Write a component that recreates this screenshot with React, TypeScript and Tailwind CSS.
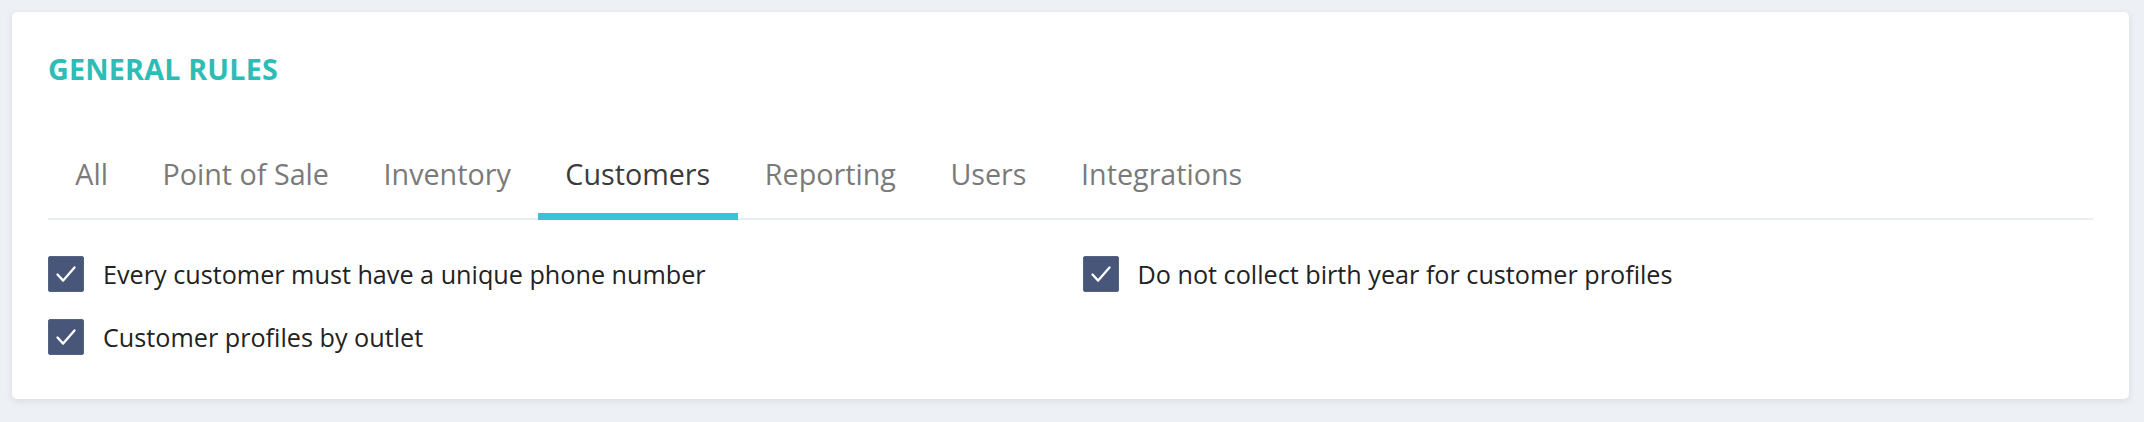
import { useState } from "react";

const TABS = ["All", "Point of Sale", "Inventory", "Customers", "Reporting", "Users", "Integrations"];

const RULES = [
  { id: "unique-phone", label: "Every customer must have a unique phone number" },
  { id: "no-birth-year", label: "Do not collect birth year for customer profiles" },
  { id: "by-outlet", label: "Customer profiles by outlet" },
];

function CheckBox({ checked }: { checked: boolean }) {
  return (
    <span
      className={`flex h-9 w-9 shrink-0 items-center justify-center rounded-[2px] border ${
        checked ? "border-[#56637f] bg-[#485679]" : "border-[#c5ccd6] bg-white"
      }`}
    >
      {checked && (
        <svg width="36" height="36" viewBox="0 0 36 36" fill="none">
          <polyline
            points="9,18.5 15,25 27,11"
            stroke="white"
            strokeWidth="2.4"
            strokeLinecap="round"
            strokeLinejoin="round"
          />
        </svg>
      )}
    </span>
  );
}

export default function App() {
  const [active, setActive] = useState("Customers");
  const [checked, setChecked] = useState<Record<string, boolean>>({
    "unique-phone": true,
    "no-birth-year": true,
    "by-outlet": true,
  });

  return (
    <div className="min-h-screen bg-[#edf0f4] pt-3 pl-3 pr-[15px] pb-6 font-['Open_Sans',sans-serif]">
      <div className="rounded-[5px] bg-white px-9 pt-[38px] pb-[44px] shadow-[0_2px_6px_rgba(60,80,110,0.12)]">
        <h2 className="text-[28.7px] leading-[38px] font-bold tracking-[0.2px] text-[#2dbdb6]">GENERAL RULES</h2>

        <div className="mt-[67px] flex border-b-2 border-[#e9eef3]">
          {TABS.map((tab) => (
            <button
              key={tab}
              onClick={() => setActive(tab)}
              className={`-mb-[2px] border-b-[7px] px-[27.3px] pb-[20px] text-[28.7px] leading-[38px] ${
                active === tab ? "border-[#38c4d2] text-[#3b3b3b]" : "border-transparent text-[#7a7a7a]"
              }`}
            >
              {tab}
            </button>
          ))}
        </div>

        <div className="mt-[36px] grid grid-cols-2 gap-x-6 gap-y-[27px]">
          {RULES.map((r) => (
            <label
              key={r.id}
              className="flex cursor-pointer items-center gap-[19px]"
              onClick={() => setChecked((c) => ({ ...c, [r.id]: !c[r.id] }))}
            >
              <CheckBox checked={checked[r.id]} />
              <span className="text-[25.2px] leading-[36px] text-[#222]">{r.label}</span>
            </label>
          ))}
        </div>
      </div>
    </div>
  );
}
